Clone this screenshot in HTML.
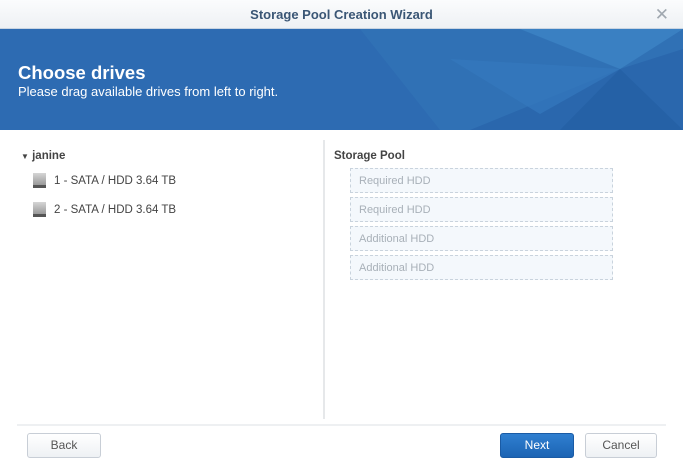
<!DOCTYPE html>
<html><head><style>
*{margin:0;padding:0;box-sizing:border-box}
body{width:683px;height:465px;background:#fff;font-family:"Liberation Sans","DejaVu Sans",sans-serif;position:relative;overflow:hidden}
.t{position:absolute;left:0;top:0;width:683px;height:29px;background:linear-gradient(#fbfcfd,#eef1f4);text-align:center;line-height:29px;font-size:13px;font-weight:bold;color:#3a5675;border-bottom:1px solid #c9d5e2}
.x{position:absolute;right:14px;top:0;font-size:17px;color:#a0a8b0;font-weight:normal}
.h{position:absolute;left:0;top:29px;width:683px;height:101px;background:#2d6bb2;overflow:hidden}
.h svg{position:absolute;left:0;top:0}
.h1{position:absolute;left:18px;top:33px;font-size:18.5px;font-weight:bold;color:#fff}
.h2{position:absolute;left:18px;top:55px;font-size:13px;color:#fff}
.a{position:absolute;font-size:11.5px;color:#444}
.d{position:absolute;left:33px;width:13px;height:15px;background:linear-gradient(#d6d6d6,#9a9a9a);border-bottom:3px solid #555}
.s{position:absolute;left:350px;width:263px;height:25px;border:1px dashed #c9d3dd;background:#f4f8fc;font-size:11px;color:#a8b0b8;padding-left:8px;line-height:24px}
.b{position:absolute;top:433px;height:25px;border:1px solid #c8ced6;border-radius:3px;background:linear-gradient(#fff,#eef1f4);font-size:12px;color:#555;text-align:center;line-height:23px}
</style></head><body>
<div class="t">Storage Pool Creation Wizard<span class="x">✕</span></div>
<div class="h">
<svg width="683" height="101"><polygon points="360,0 683,0 683,101 440,101" fill="#3071b5"/><polygon points="470,101 620,40 683,20 683,101" fill="#2a67ad"/><polygon points="520,0 620,40 683,0" fill="#3a80c2"/><polygon points="560,101 620,40 683,101" fill="#2561a6"/><polygon points="450,30 620,40 540,85" fill="#3479bd" opacity=".7"/></svg>
<div class="h1">Choose drives</div>
<div class="h2">Please drag available drives from left to right.</div>
</div>
<div class="a" style="left:21px;top:150px;font-weight:bold;color:#444"><span style="font-size:8px">▼</span> janine</div>
<div class="d" style="top:173px"></div><div class="a" style="left:54px;top:175px">1 - SATA / HDD 3.64 TB</div>
<div class="d" style="top:202px"></div><div class="a" style="left:54px;top:204px">2 - SATA / HDD 3.64 TB</div>
<div style="position:absolute;left:323px;top:140px;width:2px;height:279px;background:#e6e8ea"></div>
<div class="a" style="left:334px;top:150px;font-weight:bold;color:#444">Storage Pool</div>
<div class="s" style="top:168px">Required HDD</div>
<div class="s" style="top:197px">Required HDD</div>
<div class="s" style="top:226px">Additional HDD</div>
<div class="s" style="top:255px">Additional HDD</div>
<div style="position:absolute;left:17px;top:424px;width:649px;height:2px;background:#eef0f2"></div>
<div class="b" style="left:27px;width:74px">Back</div>
<div class="b" style="left:500px;width:74px;background:linear-gradient(#2f7fd0,#1c64b4);border-color:#1a5ba5;color:#fff">Next</div>
<div class="b" style="left:585px;width:72px">Cancel</div>
</body></html>
